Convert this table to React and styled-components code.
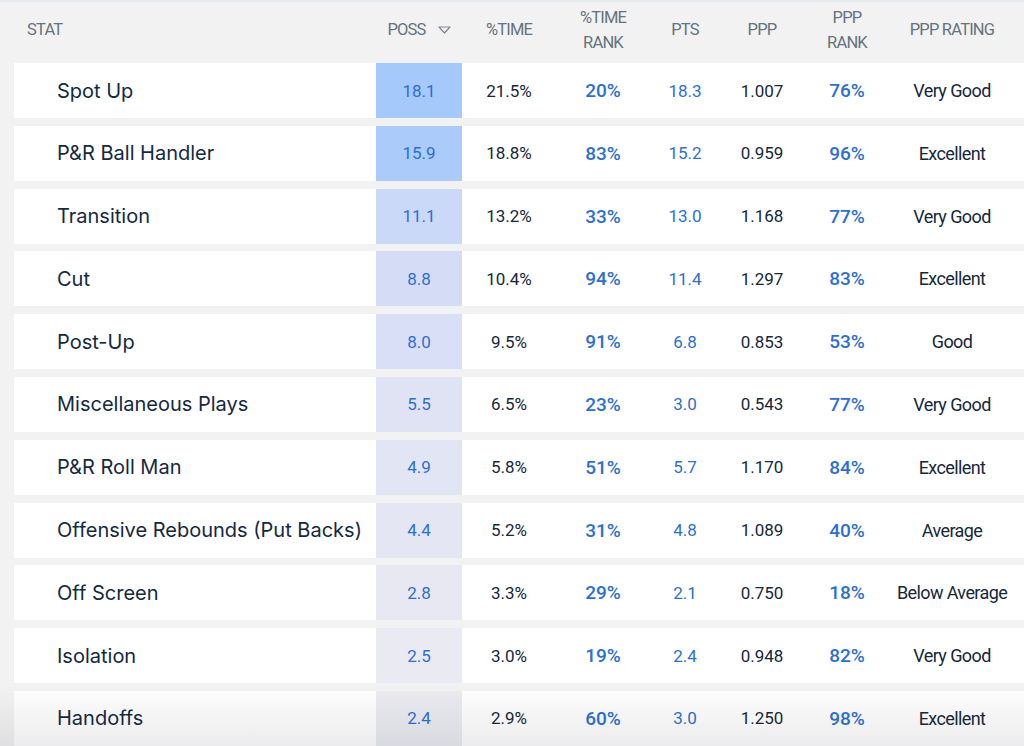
import React from "react";
import styled, { createGlobalStyle } from "styled-components";

const plays = [
	{ name: "Spot Up", poss: "18.1", shade: "#a5c9fb", time: "21.5%", timeRank: "20%", pts: "18.3", ppp: "1.007", pppRank: "76%", rating: "Very Good" },
	{ name: "P&R Ball Handler", poss: "15.9", shade: "#abcbfa", time: "18.8%", timeRank: "83%", pts: "15.2", ppp: "0.959", pppRank: "96%", rating: "Excellent" },
	{ name: "Transition", poss: "11.1", shade: "#cbd9f8", time: "13.2%", timeRank: "33%", pts: "13.0", ppp: "1.168", pppRank: "77%", rating: "Very Good" },
	{ name: "Cut", poss: "8.8", shade: "#d5ddf6", time: "10.4%", timeRank: "94%", pts: "11.4", ppp: "1.297", pppRank: "83%", rating: "Excellent" },
	{ name: "Post-Up", poss: "8.0", shade: "#d8dff6", time: "9.5%", timeRank: "91%", pts: "6.8", ppp: "0.853", pppRank: "53%", rating: "Good" },
	{ name: "Miscellaneous Plays", poss: "5.5", shade: "#dfe3f4", time: "6.5%", timeRank: "23%", pts: "3.0", ppp: "0.543", pppRank: "77%", rating: "Very Good" },
	{ name: "P&R Roll Man", poss: "4.9", shade: "#e2e5f3", time: "5.8%", timeRank: "51%", pts: "5.7", ppp: "1.170", pppRank: "84%", rating: "Excellent" },
	{ name: "Offensive Rebounds (Put Backs)", poss: "4.4", shade: "#e5e6f3", time: "5.2%", timeRank: "31%", pts: "4.8", ppp: "1.089", pppRank: "40%", rating: "Average" },
	{ name: "Off Screen", poss: "2.8", shade: "#e8e8f2", time: "3.3%", timeRank: "29%", pts: "2.1", ppp: "0.750", pppRank: "18%", rating: "Below Average" },
	{ name: "Isolation", poss: "2.5", shade: "#eaeaf2", time: "3.0%", timeRank: "19%", pts: "2.4", ppp: "0.948", pppRank: "82%", rating: "Very Good" },
	{ name: "Handoffs", poss: "2.4", shade: "#ebebf1", time: "2.9%", timeRank: "60%", pts: "3.0", ppp: "1.250", pppRank: "98%", rating: "Excellent" },
];

const GlobalStyle = createGlobalStyle`
	html, body {
		margin: 0;
		padding: 0;
		background: #f2f2f2;
		font-family: Roboto, "Liberation Sans", sans-serif;
	}
	body { overflow: hidden; }
`;

const Page = styled.div`
	position: relative;
	width: 1024px;
	height: 746px;
	overflow: hidden;
	border-top: 2px solid #e5eaf0;
	box-sizing: border-box;
	background: #f2f2f2;
`;

const cols = "362px 86px 94px 94px 70px 84px 86px 124px 1fr";

const HeaderRow = styled.div`
	display: grid;
	grid-template-columns: ${cols};
	height: 61px;
	padding: 0 0 6px 14px;
	align-items: center;
	box-sizing: border-box;
`;

const Th = styled.div`
	display: flex;
	align-items: center;
	justify-content: ${(p) => (p.$left ? "flex-start" : "center")};
	padding-left: ${(p) => (p.$left ? "13px" : "0")};
	gap: 12px;
	text-align: center;
	font-size: 16.5px;
	line-height: 25px;
	color: #65727f;
	letter-spacing: -0.8px;
	text-transform: uppercase;
`;

const Body = styled.div`
	display: grid;
	row-gap: 7.8px;
	padding-left: 14px;
`;

const Row = styled.div`
	display: grid;
	grid-template-columns: ${cols};
	height: 55px;
	background: #fff;
	align-items: stretch;
`;

const Name = styled.div`
	display: flex;
	align-items: center;
	padding-left: 43px;
	font-family: Inter, Roboto, sans-serif;
	font-size: 20px;
	color: #13293f;
	white-space: nowrap;
`;

const Cell = styled.div`
	display: flex;
	align-items: center;
	justify-content: center;
	font-size: ${(p) => (p.$rank ? "19px" : p.$rating ? "18px" : "17px")};
	font-weight: ${(p) => (p.$rank ? 500 : 400)};
	color: ${(p) => (p.$blue ? "#2a6fd6" : "#15273a")};
	background: ${(p) => p.$bg || "transparent"};
	letter-spacing: ${(p) => (p.$rating ? "-0.6px" : "0")};
	white-space: nowrap;
`;

const Fade = styled.div`
	position: absolute;
	left: 0;
	right: 0;
	bottom: 0;
	height: 62px;
	background: linear-gradient(to bottom, rgba(0, 0, 0, 0), rgba(40, 40, 60, 0.09));
	pointer-events: none;
`;

const SortIcon = () => (
	<svg width="13" height="8" viewBox="0 0 13 8">
		<path d="M1 1 L12 1 L6.5 7 Z" fill="none" stroke="#7d8894" strokeWidth="1.2" strokeLinejoin="round" />
	</svg>
);

const App = () => {
	return (
		<Page>
			<GlobalStyle />
			<HeaderRow>
				<Th $left>Stat</Th>
				<Th>Poss <SortIcon /></Th>
				<Th>%Time</Th>
				<Th>%Time<br />Rank</Th>
				<Th>Pts</Th>
				<Th>PPP</Th>
				<Th>PPP<br />Rank</Th>
				<Th>PPP Rating</Th>
				<div />
			</HeaderRow>
			<Body>
				{plays.map((p) => (
					<Row key={p.name}>
						<Name>{p.name}</Name>
						<Cell $blue $bg={p.shade}>{p.poss}</Cell>
						<Cell>{p.time}</Cell>
						<Cell $blue $rank>{p.timeRank}</Cell>
						<Cell $blue>{p.pts}</Cell>
						<Cell>{p.ppp}</Cell>
						<Cell $blue $rank>{p.pppRank}</Cell>
						<Cell $rating>{p.rating}</Cell>
						<div />
					</Row>
				))}
			</Body>
			<Fade />
		</Page>
	);
};

export default App;
